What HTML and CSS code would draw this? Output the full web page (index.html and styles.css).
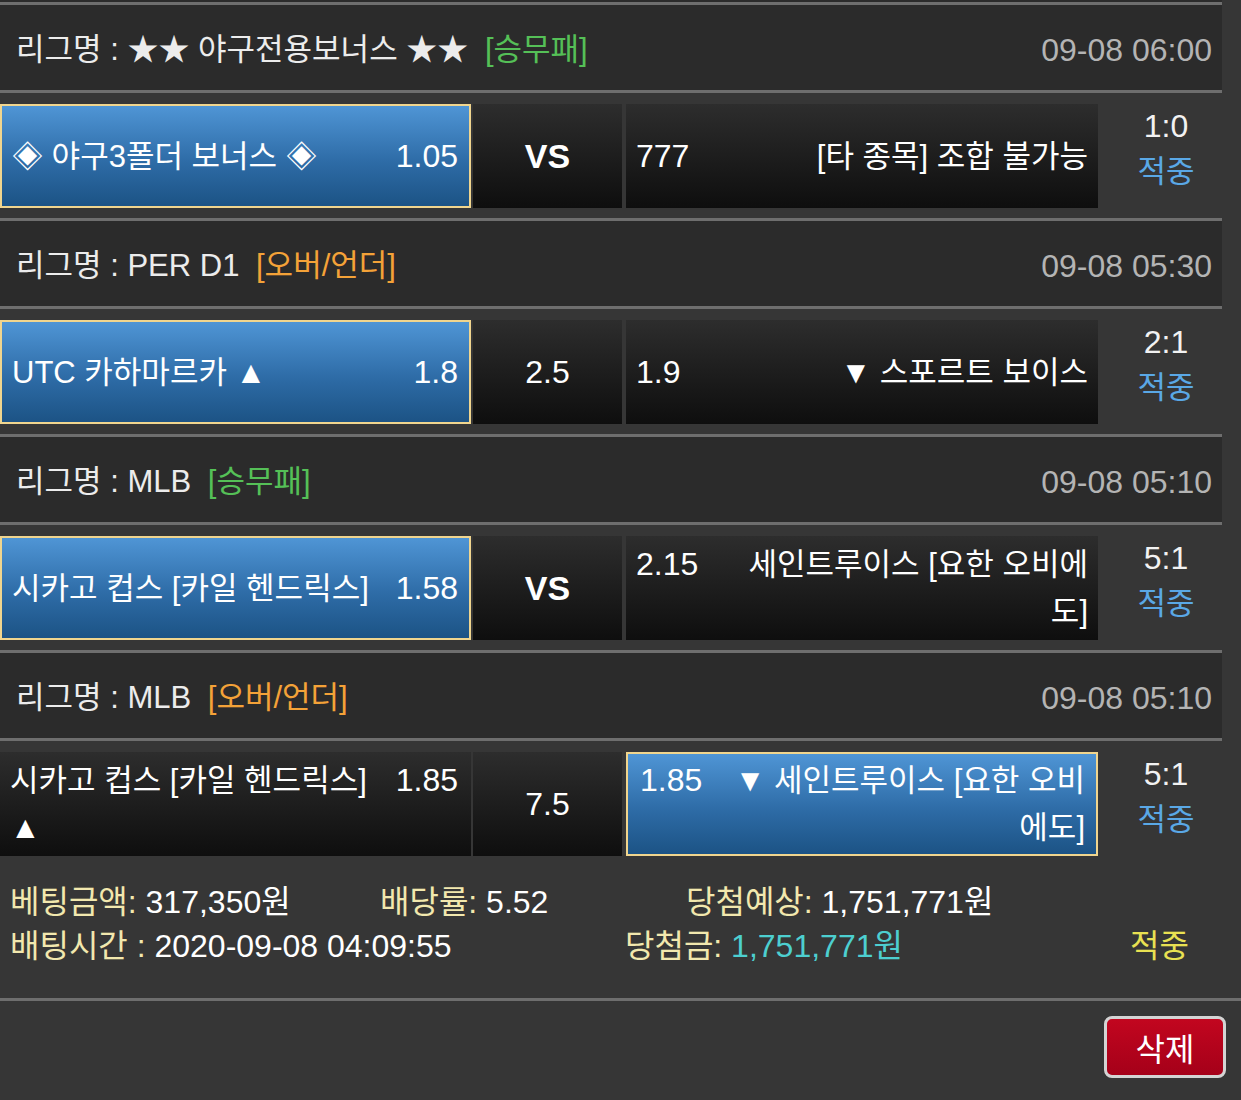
FILE: index.html
```html
<!DOCTYPE html>
<html lang="ko">
<head>
    <meta charset="UTF-8">
    <meta name="viewport" content="width=device-width, initial-scale=1.0">
    <title>배팅내역</title>
    <link rel="stylesheet" href="styles.css">
</head>
<body>
    <div class="bet-list">
        <div class="league">
            <span class="league-name">리그명 : ★★ 야구전용보너스 ★★ <span class="tag green">[승무패]</span></span>
            <span class="league-time">09-08 06:00</span>
        </div>
        <div class="match">
            <div class="cell home picked">
                <div class="cell-in"><span class="team">◈ 야구3폴더 보너스 ◈</span><span class="odds">1.05</span></div>
            </div>
            <div class="cell mid"><b>VS</b></div>
            <div class="cell away">
                <div class="cell-in"><span class="odds">777</span><span class="team">[타 종목] 조합 불가능</span></div>
            </div>
            <div class="result"><div class="score">1:0</div><div class="hit">적중</div></div>
        </div>

        <div class="league">
            <span class="league-name">리그명 : PER D1 <span class="tag orange">[오버/언더]</span></span>
            <span class="league-time">09-08 05:30</span>
        </div>
        <div class="match">
            <div class="cell home picked">
                <div class="cell-in"><span class="team">UTC 카하마르카 ▲</span><span class="odds">1.8</span></div>
            </div>
            <div class="cell mid">2.5</div>
            <div class="cell away">
                <div class="cell-in"><span class="odds">1.9</span><span class="team">▼ 스포르트 보이스</span></div>
            </div>
            <div class="result"><div class="score">2:1</div><div class="hit">적중</div></div>
        </div>

        <div class="league">
            <span class="league-name">리그명 : MLB <span class="tag green">[승무패]</span></span>
            <span class="league-time">09-08 05:10</span>
        </div>
        <div class="match">
            <div class="cell home picked">
                <div class="cell-in"><span class="team">시카고 컵스 [카일 헨드릭스]</span><span class="odds">1.58</span></div>
            </div>
            <div class="cell mid"><b>VS</b></div>
            <div class="cell away">
                <div class="cell-in"><span class="odds">2.15</span><span class="team">세인트루이스 [요한 오비에<br>도]</span></div>
            </div>
            <div class="result"><div class="score">5:1</div><div class="hit">적중</div></div>
        </div>

        <div class="league">
            <span class="league-name">리그명 : MLB <span class="tag orange">[오버/언더]</span></span>
            <span class="league-time">09-08 05:10</span>
        </div>
        <div class="match">
            <div class="cell home">
                <div class="cell-in"><span class="team">시카고 컵스 [카일 헨드릭스]<br>▲</span><span class="odds">1.85</span></div>
            </div>
            <div class="cell mid">7.5</div>
            <div class="cell away picked">
                <div class="cell-in"><span class="odds">1.85</span><span class="team">▼ 세인트루이스 [요한 오비<br>에도]</span></div>
            </div>
            <div class="result"><div class="score">5:1</div><div class="hit">적중</div></div>
        </div>
    </div>

    <div class="summary">
        <div class="sum-row">
            <span class="col-a"><em>베팅금액:</em> 317,350원</span>
            <span class="col-b"><em>배당률:</em> 5.52</span>
            <span><em>당첨예상:</em> 1,751,771원</span>
        </div>
        <div class="sum-row">
            <span class="col-c"><em>배팅시간 :</em> 2020-09-08 04:09:55</span>
            <span class="col-d"><em>당첨금:</em> <span class="won">1,751,771원</span></span>
            <span class="hit-yellow">적중</span>
        </div>
    </div>

    <div class="actions">
        <button class="btn-delete">삭제</button>
    </div>
</body>
</html>
```

FILE: styles.css
```css
body {
    font-family: "Liberation Sans", "Noto Sans CJK KR", sans-serif;
    margin: 0;
    background-color: #363636;
    color: #fff;
    font-size: 31px;
}

.bet-list {
    width: 1222px;
    border-top: 2px solid #2b2b2b;
}

.league {
    height: 91px;
    box-sizing: border-box;
    padding: 5px 10px 0 16px;
    display: flex;
    align-items: center;
    justify-content: space-between;
    background: #2b2b2b;
    border-top: 3px solid #6e6e6e;
    border-bottom: 3px solid #6e6e6e;
    line-height: 40px;
}

.league-name {
    color: #ececec;
}

.league-time {
    color: #b4b4b4;
    font-size: 32px;
}

.tag {
    margin-left: 8px;
}

.tag.green {
    color: #55c057;
}

.tag.orange {
    color: #f4a238;
}

.match {
    height: 125px;
    box-sizing: border-box;
    padding-top: 11px;
    display: flex;
    align-items: flex-start;
}

.cell {
    height: 104px;
    box-sizing: border-box;
    display: flex;
    align-items: center;
    background: linear-gradient(#2d2d2d, #0e0e0e);
    line-height: 47px;
}

.cell.picked {
    background: linear-gradient(#4f95d5, #2e6ca7 55%, #1c5385);
    border: 2px solid #f0d58e;
}

.cell-in {
    width: 100%;
    display: flex;
    align-items: flex-start;
    justify-content: space-between;
}

.team {
    white-space: nowrap;
}

.odds {
    font-size: 32px;
    white-space: nowrap;
}

.home {
    width: 471px;
    padding: 0 13px 0 10px;
}

.home.picked {
    padding: 0 11px 0 10px;
}

.home .team {
    padding-right: 20px;
}

.mid {
    width: 149px;
    margin-left: 2px;
    justify-content: center;
    font-size: 32px;
}

.mid b {
    font-size: 34px;
}

.away {
    width: 472px;
    margin-left: 4px;
    padding: 0 10px;
}

.away.picked {
    padding: 0 11px 0 12px;
}

.away .team {
    flex: 1;
    text-align: right;
    padding-left: 16px;
}

.result {
    flex: 1;
    padding-left: 12px;
    text-align: center;
    line-height: 45px;
}

.score {
    color: #f2f2f2;
    font-size: 32px;
}

.hit {
    color: #5aa8e6;
}

.summary {
    padding: 14px 10px 30px;
    border-bottom: 3px solid #6e6e6e;
    line-height: 44px;
    font-size: 32px;
}

.sum-row {
    display: flex;
}

.summary em {
    font-style: normal;
    color: #f2e8ae;
}

.col-a {
    width: 370px;
}

.col-b {
    width: 306px;
}

.col-c {
    width: 615px;
}

.col-d {
    width: 505px;
}

.won {
    color: #4dcfd0;
}

.hit-yellow {
    color: #e9e152;
}

.actions {
    display: flex;
    justify-content: flex-end;
    padding: 15px 15px;
}

.btn-delete {
    width: 122px;
    height: 62px;
    font-family: inherit;
    font-size: 32px;
    color: #fff;
    background: linear-gradient(#c2061f, #a50019);
    border: 3px solid #d4d4d4;
    border-radius: 8px;
    cursor: pointer;
}
```
